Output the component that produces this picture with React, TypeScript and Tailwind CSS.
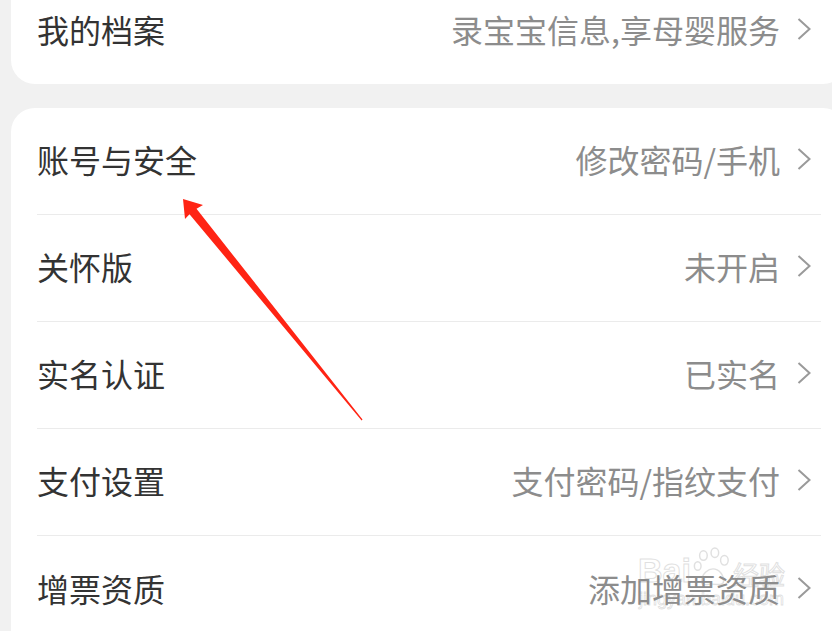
import React from "react";

const FONT = { fontFamily: '"Noto Sans CJK SC", "Noto Sans", sans-serif' };

function Chevron() {
  return (
    <svg width="14" height="22" viewBox="0 0 14 22" className="ml-[17px] mr-[10px] shrink-0">
      <polyline
        points="1.5,1 12.5,11 1.5,21"
        fill="none"
        stroke="#9a9a9a"
        strokeWidth="2"
      />
    </svg>
  );
}

function Row({ label, value, last }: { label: string; value: string; last?: boolean }) {
  return (
    <div className="mx-[26px] h-[107px]">
      <div
        className={
          "flex h-full items-center justify-between pb-[4px] " +
          (last ? "" : "border-b border-[#ebebeb]")
        }
      >
        <span className="text-[32px] leading-none text-[#333333]">{label}</span>
        <span className="flex items-center">
          <span className="text-[32px] leading-none text-[#8c8c8c]">{value}</span>
          <Chevron />
        </span>
      </div>
    </div>
  );
}

const ROWS = [
  { label: "账号与安全", value: "修改密码/手机" },
  { label: "关怀版", value: "未开启" },
  { label: "实名认证", value: "已实名" },
  { label: "支付设置", value: "支付密码/指纹支付" },
  { label: "增票资质", value: "添加增票资质" },
];

export default function App() {
  return (
    <div className="relative h-[631px] w-[832px] overflow-hidden bg-[#f1f1f1]" style={FONT}>
      <div className="-mt-[23px] ml-[11px] w-[836px] rounded-[24px] bg-white">
        <Row label="我的档案" value="录宝宝信息,享母婴服务" last />
      </div>
      <div className="ml-[11px] mt-[24px] w-[836px] rounded-[24px] bg-white pb-[10px]">
        {ROWS.map((r, i) => (
          <Row key={r.label} label={r.label} value={r.value} last={i === ROWS.length - 1} />
        ))}
      </div>

      {/* annotation arrow */}
      <svg className="pointer-events-none absolute left-0 top-0" width="832" height="631">
        <polygon
          points="183,199 203,205 196.5,208.8 362.5,419.6 361.6,420.4 189.5,214.2 185,219"
          fill="#ff2414"
        />
      </svg>

      {/* faint watermark */}
      <div className="pointer-events-none absolute left-[638px] top-[545px] flex flex-col items-center opacity-30">
        <div className="flex items-end gap-[1px]">
          <span
            className="text-[34px] font-bold leading-none text-transparent"
            style={{ WebkitTextStroke: "1px #9a9a9a", fontFamily: '"Liberation Sans", sans-serif' }}
          >
            Bai
          </span>
          <svg width="40" height="44" viewBox="0 0 42 44" className="-mb-[2px]">
            <g fill="none" stroke="#9a9a9a" strokeWidth="1.5">
              <ellipse cx="12" cy="10" rx="4" ry="5" />
              <ellipse cx="24" cy="7" rx="4" ry="5" />
              <ellipse cx="34" cy="15" rx="4" ry="5" />
              <ellipse cx="6" cy="21" rx="3.5" ry="4.5" />
              <path d="M10 38 C10 28 18 24 22 24 C28 24 34 30 33 38 C32 42 26 40 21 40 C16 40 10 42 10 38 Z" />
            </g>
          </svg>
          <span
            className="text-[26px] leading-none text-transparent"
            style={{ WebkitTextStroke: "1px #9a9a9a" }}
          >
            经验
          </span>
        </div>
        <span
          className="mt-[3px] text-[18px] leading-none text-transparent"
          style={{ WebkitTextStroke: "0.8px #9a9a9a", fontFamily: '"Liberation Sans", sans-serif' }}
        >
          jingyan.baidu.com
        </span>
      </div>
    </div>
  );
}
